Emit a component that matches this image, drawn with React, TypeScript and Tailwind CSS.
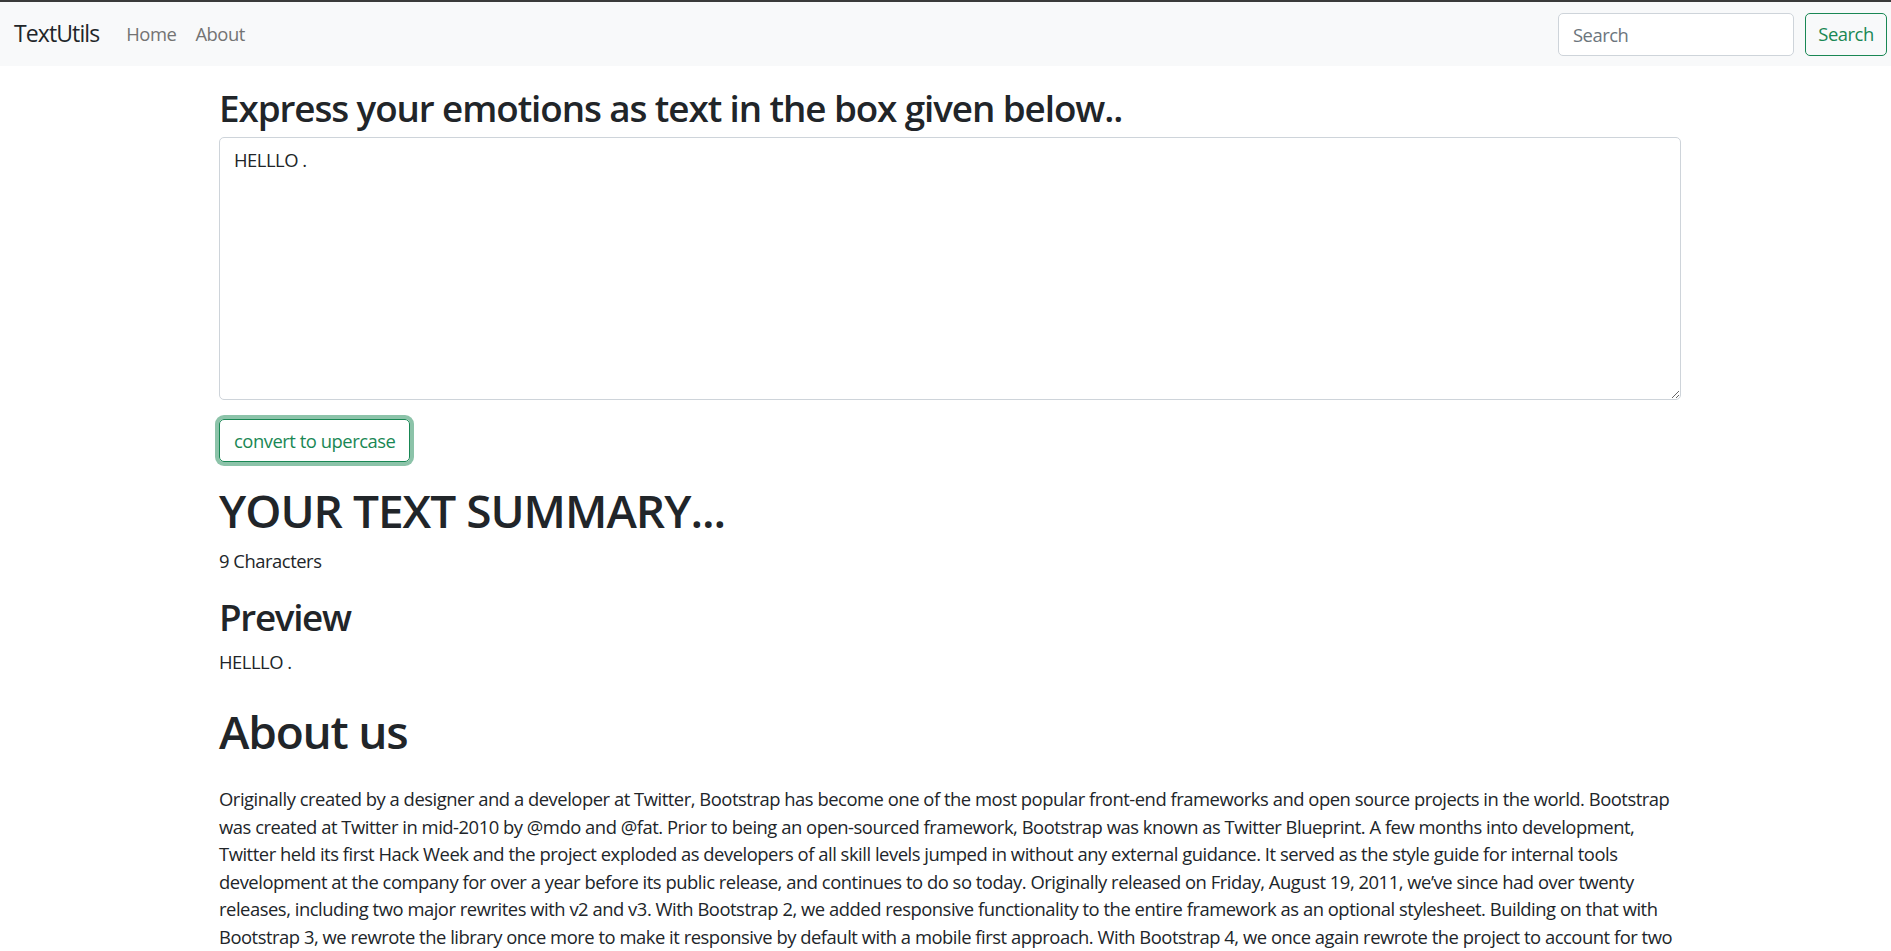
import React from "react";

const font = { fontFamily: '"Open Sans", "Noto Sans", sans-serif' };

const aboutLines = [
    "Originally created by a designer and a developer at Twitter, Bootstrap has become one of the most popular front-end frameworks and open source projects in the world. Bootstrap",
    "was created at Twitter in mid-2010 by @mdo and @fat. Prior to being an open-sourced framework, Bootstrap was known as Twitter Blueprint. A few months into development,",
    "Twitter held its first Hack Week and the project exploded as developers of all skill levels jumped in without any external guidance. It served as the style guide for internal tools",
    "development at the company for over a year before its public release, and continues to do so today. Originally released on Friday, August 19, 2011, we\u2019ve since had over twenty",
    "releases, including two major rewrites with v2 and v3. With Bootstrap 2, we added responsive functionality to the entire framework as an optional stylesheet. Building on that with",
    "Bootstrap 3, we rewrote the library once more to make it responsive by default with a mobile first approach. With Bootstrap 4, we once again rewrote the project to account for two",
];

function Navbar() {
    return (
        <nav className="border-t-2 border-[#3a3a3a] bg-[#f8f9fa] h-[66px] flex items-center pl-[14px] pr-[4px]">
            {/* Brand */}
            <a href="#" className="text-[23px] tracking-[-0.9px] text-[#212529] leading-none -mt-[1px]">
                TextUtils
            </a>

            {/* Links */}
            <div className="flex items-center ml-[27px] gap-[19px] text-[18.4px] text-[#737373]">
                <a href="#">Home</a>
                <a href="#">About</a>
            </div>

            {/* Search */}
            <form className="ml-auto flex items-center gap-[11px]">
                <input
                    type="search"
                    placeholder="Search"
                    className="w-[236px] h-[43px] bg-white border border-[#ced4da] rounded-[5px] px-[14px] text-[18.4px] text-[#212529] placeholder:text-[#6c757d] outline-none"
                    style={font}
                />
                <button
                    type="button"
                    className="w-[82px] h-[43px] border border-[#198754] rounded-[5px] text-[18.4px] text-[#198754]"
                    style={font}
                >
                    Search
                </button>
            </form>
        </nav>
    );
}

export default function App() {
    return (
        <div className="min-h-screen bg-white text-[#212529] tracking-[-0.47px]" style={font}>
            <Navbar />

            <div className="ml-[219px] w-[1462px]">
                {/* Text form */}
                <h2 className="text-[36.8px] font-semibold tracking-[-1.08px] leading-[1.2] mt-[20px] mb-[7px]">
                    Express your emotions as text in the box given below..
                </h2>
                <textarea
                    defaultValue="HELLLO ."
                    className="block w-full h-[263px] border border-[#ced4da] rounded-[5px] px-[14px] py-[8px] text-[18.4px] leading-[1.5] tracking-[-0.47px] resize-y outline-none"
                    style={font}
                />
                <button
                    type="button"
                    className="mt-[19px] h-[43px] px-[14px] border border-[#198754] rounded-[5px] text-[18.4px] text-[#198754] shadow-[0_0_0_4px_rgba(25,135,84,0.5)]"
                >
                    convert to upercase
                </button>

                {/* Summary */}
                <h1 className="text-[46px] font-semibold tracking-[-1px] leading-[1.2] mt-[21px] mb-[9px]">YOUR TEXT SUMMARY...</h1>
                <p className="text-[18.4px] leading-[1.5] mb-[20px]">9 Characters</p>
                <h2 className="text-[36.8px] font-semibold tracking-[-1.3px] leading-[1.2] mb-[9px]">Preview</h2>
                <p className="text-[18.4px] leading-[1.5] mb-[17px]">HELLLO .</p>

                {/* About */}
                <h1 className="text-[46px] font-semibold tracking-[-1.2px] leading-[1.2] mt-[28px] mb-[26px]">About us</h1>
                <p className="text-[18.4px] leading-[27.6px] whitespace-nowrap">
                    {aboutLines.map((line, i) => (
                        <React.Fragment key={i}>
                            {line}
                            <br />
                        </React.Fragment>
                    ))}
                </p>
            </div>
        </div>
    );
}
